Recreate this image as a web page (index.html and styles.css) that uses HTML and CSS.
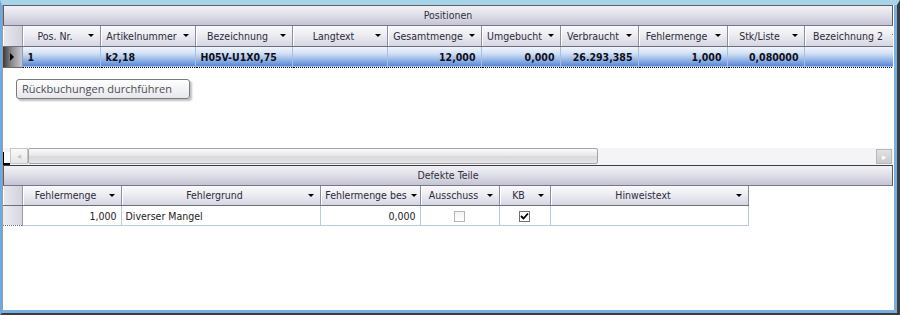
FILE: index.html
```html
<!DOCTYPE html>
<html lang="de">
<head>
    <meta charset="UTF-8">
    <title>Positionen / Defekte Teile</title>
    <link rel="stylesheet" href="styles.css">
</head>
<body>
    <div class="window">
        <div class="client">

            <!-- Positionen grid -->
            <div class="caption">Positionen</div>
            <div class="grid-clip">
                <table class="grid top-grid">
                    <colgroup>
                        <col style="width:19px"><col style="width:78px"><col style="width:95px">
                        <col style="width:97px"><col style="width:95px"><col style="width:94px">
                        <col style="width:79px"><col style="width:78px"><col style="width:89px">
                        <col style="width:77px"><col style="width:100px">
                    </colgroup>
                    <tr class="head">
                        <th class="corner"></th>
                        <th><div class="hd"><span>Pos. Nr.</span><i class="arrow"></i></div></th>
                        <th><div class="hd"><span>Artikelnummer</span><i class="arrow"></i></div></th>
                        <th><div class="hd"><span>Bezeichnung</span><i class="arrow"></i></div></th>
                        <th><div class="hd"><span>Langtext</span><i class="arrow"></i></div></th>
                        <th><div class="hd"><span>Gesamtmenge</span><i class="arrow"></i></div></th>
                        <th><div class="hd"><span>Umgebucht</span><i class="arrow"></i></div></th>
                        <th><div class="hd"><span>Verbraucht</span><i class="arrow"></i></div></th>
                        <th><div class="hd"><span>Fehlermenge</span><i class="arrow"></i></div></th>
                        <th><div class="hd"><span>Stk/Liste</span><i class="arrow"></i></div></th>
                        <th><div class="hd"><span>Bezeichnung 2</span><i class="arrow"></i></div></th>
                    </tr>
                    <tr class="selected">
                        <td class="selector current"><i class="tri"></i></td>
                        <td>1</td>
                        <td>k2,18</td>
                        <td>H05V-U1X0,75</td>
                        <td></td>
                        <td class="num">12,000</td>
                        <td class="num">0,000</td>
                        <td class="num">26.293,385</td>
                        <td class="num">1,000</td>
                        <td class="num">0,080000</td>
                        <td></td>
                    </tr>
                </table>
            </div>

            <div class="empty-area">
                <div class="tooltip">Rückbuchungen durchführen</div>
            </div>

            <!-- horizontal scrollbar -->
            <div class="hscroll">
                <div class="split-mark"></div>
                <div class="sb-btn left">&#9666;</div>
                <div class="sb-thumb"></div>
                <div class="sb-track"></div>
                <div class="sb-btn right">&#9656;</div>
            </div>

            <!-- Defekte Teile grid -->
            <div class="caption caption-2">Defekte Teile</div>
            <table class="grid bottom-grid">
                <colgroup>
                    <col style="width:19px"><col style="width:99px"><col style="width:199px">
                    <col style="width:100px"><col style="width:79px"><col style="width:51px">
                    <col style="width:198px">
                </colgroup>
                <tr class="head">
                    <th class="corner"></th>
                    <th><div class="hd"><span>Fehlermenge</span><i class="arrow"></i></div></th>
                    <th><div class="hd"><span>Fehlergrund</span><i class="arrow"></i></div></th>
                    <th><div class="hd tight"><span>Fehlermenge bes</span><i class="arrow"></i></div></th>
                    <th><div class="hd"><span>Ausschuss</span><i class="arrow"></i></div></th>
                    <th><div class="hd"><span>KB</span><i class="arrow"></i></div></th>
                    <th><div class="hd"><span>Hinweistext</span><i class="arrow"></i></div></th>
                </tr>
                <tr class="plain">
                    <td class="selector"></td>
                    <td class="num">1,000</td>
                    <td>Diverser Mangel</td>
                    <td class="num">0,000</td>
                    <td class="center"><span class="check"></span></td>
                    <td class="center">
                        <span class="check on">
                            <svg width="9" height="9" viewBox="0 0 9 9"><path d="M1 4 L3.5 6.5 L8 1.5" fill="none" stroke="#000" stroke-width="1.8"/></svg>
                        </span>
                    </td>
                    <td></td>
                </tr>
            </table>

        </div>
    </div>
</body>
</html>
```

FILE: styles.css
```css
/* Basic reset */
* {
    box-sizing: border-box;
}

body {
    margin: 0;
    background: #ffffff;
    font-family: "DejaVu Sans Condensed", "DejaVu Sans", Verdana, sans-serif;
    font-size: 10.5px;
    color: #1c1c24;
}

/* Window frame */
.window {
    width: 900px;
    height: 315px;
    border-top: 5px solid #a9d3e6;
    border-left: 2px solid #6fa9e2;
    border-right: 3px solid #3c3c3c;
    border-bottom: 2px solid #3c3c3c;
}

.client {
    height: 100%;
    background: #ffffff;
    border-left: 1px solid #9c9c9c;
    border-right: 3px solid #76aee6;
    border-bottom: 3px solid #76aee6;
    padding-right: 1px;
    display: flex;
    flex-direction: column;
}

/* Caption bar above each grid */
.caption {
    height: 21px;
    line-height: 19px;
    text-align: center;
    color: #30303c;
    border: 1px solid #5c5c6c;
    border-bottom-color: #77778a;
    background: linear-gradient(#f1f1f5, #dcdce6 55%, #c4c4d4);
}

.caption-2 {
    border-top-color: #3c3c44;
}

/* Grid tables */
.grid-clip {
    width: 890px;
    overflow: hidden;
}

.grid {
    table-layout: fixed;
    border-collapse: collapse;
    border-spacing: 0;
}

.top-grid {
    width: 901px;
}

.bottom-grid {
    width: 745px;
}

.grid th,
.grid td {
    padding: 0;
    overflow: hidden;
    white-space: nowrap;
}

.head th {
    height: 20px;
    font-weight: normal;
    color: #2c2c3a;
    border-right: 1px solid #8c8c9c;
    border-bottom: 1px solid #6e6e82;
    background: linear-gradient(#fafafd, #ececf2 45%, #d6d6e2 100%);
    box-shadow: inset 1px 0 0 #ffffff;
}

.head th.corner {
    background: linear-gradient(to right, #e8e8ee, #d2d2de);
    border-right-color: #9a9aa8;
}

.hd {
    display: flex;
    align-items: center;
    height: 19px;
    padding: 0 6px 0 4px;
}

.hd.tight {
    padding: 0 3px 0 2px;
}

.hd span {
    flex: 1;
    text-align: center;
    overflow: hidden;
}

.arrow {
    width: 0;
    height: 0;
    margin-left: 4px;
    border-left: 3px solid transparent;
    border-right: 3px solid transparent;
    border-top: 3px solid #000000;
}

.hd.tight .arrow {
    margin-left: 1px;
}

/* Selected (current) row of the top grid */
.selected td {
    height: 21px;
    font-weight: bold;
    color: #101018;
    padding: 0 5px;
    border-top: 1px dotted #000000;
    border-bottom: 1px dotted #000000;
    border-right: 1px solid #a9bfdf;
    background: linear-gradient(#f2f6fc, #d3e1f5 35%, #8fb1e6 70%, #5284d6);
}

.selected td.selector {
    padding: 0;
    border-top: 1px solid #6a6a6a;
    border-bottom: 1px solid #6a6a6a;
    border-right: 1px solid #9a9aa8;
    background: linear-gradient(to right, #3a3a3a, #8a8a8e 45%, #c8c8d0);
}

.tri {
    display: block;
    width: 0;
    height: 0;
    margin-left: 7px;
    border-top: 4px solid transparent;
    border-bottom: 4px solid transparent;
    border-left: 4px solid #000000;
}

.num {
    text-align: right;
}

.center {
    text-align: center;
}

/* Plain row of the bottom grid */
.plain td {
    height: 20px;
    padding: 0 4px;
    border-right: 1px solid #b8cae4;
    border-bottom: 1px solid #b8cae4;
}

.plain td.selector {
    padding: 0;
    border-right: 1px solid #9a9aa8;
    border-bottom: 1px dotted #6c6c7c;
    background: linear-gradient(to right, #ececf2, #d6d6e2);
}

.check {
    display: inline-block;
    vertical-align: middle;
    width: 11px;
    height: 11px;
    border: 1px solid #b4b4b4;
    background: linear-gradient(#f4f4f4, #ffffff);
}

.check.on {
    border-color: #707070;
    background: #ffffff;
}

.check svg {
    display: block;
}

/* White area below the first grid */
.empty-area {
    position: relative;
    height: 80px;
}

.tooltip {
    position: absolute;
    left: 13px;
    top: 11px;
    width: 174px;
    height: 20px;
    padding-left: 5px;
    line-height: 18px;
    font-family: "Open Sans", "DejaVu Sans", sans-serif;
    font-size: 11px;
    color: #4e4e4e;
    border: 1px solid #7a7a7a;
    border-radius: 3px;
    background: linear-gradient(#ffffff, #e6e7ef);
    box-shadow: 2px 2px 2px rgba(0, 0, 0, 0.25);
}

/* Horizontal scrollbar */
.hscroll {
    display: flex;
    height: 17px;
    padding-right: 1px;
    background: #f4f4f6;
}

.split-mark {
    width: 7px;
    border-left: 1px solid #000000;
    border-bottom: 2px solid #000000;
    margin-top: 4px;
    background: #ffffff;
}

.sb-btn {
    width: 17px;
    height: 16px;
    line-height: 14px;
    text-align: center;
    font-size: 9px;
    color: #c8c8c8;
    border: 1px solid #c6c6c6;
    background: linear-gradient(#fafafa, #e6e6e8);
}

.sb-btn.left {
    width: 18px;
}

.sb-btn.right {
    width: 16px;
    height: 15px;
    margin-top: 1px;
    color: #ffffff;
    border-color: #b8b8b8;
    background: linear-gradient(#e2e2e4, #cacacc);
}

.sb-thumb {
    width: 570px;
    height: 16px;
    border: 1px solid #a4a4a4;
    border-radius: 2px;
    background: linear-gradient(#fbfbfb, #e8e8ea 45%, #d8d8da 55%, #e6e6e8);
}

.sb-track {
    flex: 1;
}
```
